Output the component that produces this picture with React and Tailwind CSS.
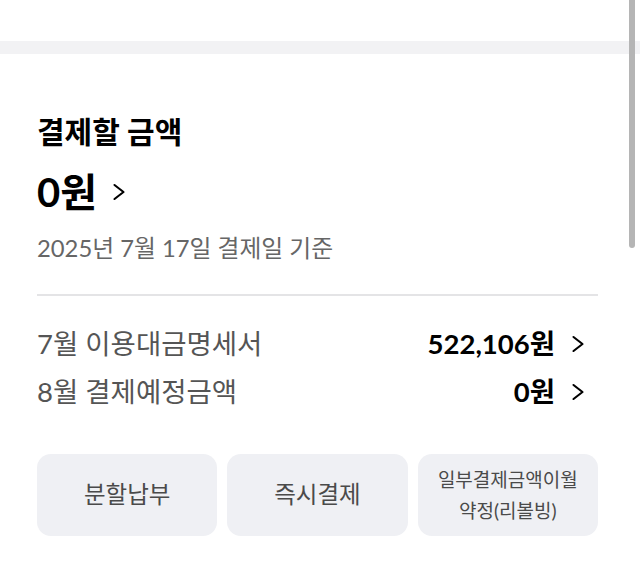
import React from 'react';

const FONT = { fontFamily: 'Lato, "Noto Sans CJK KR", "Noto Sans", sans-serif' };

function Chevron({ className }) {
  return (
    <svg className={className} viewBox="0 0 14 18" fill="none" stroke="currentColor" strokeWidth="2.1" strokeLinecap="round" strokeLinejoin="round">
      <polyline points="2.5,2 11.5,9 2.5,16" />
    </svg>
  );
}

function Row({ label, value }) {
  return (
    <div className="flex items-center justify-between h-[36px]">
      <span className="text-[27.5px] leading-[36px] text-[#555]">{label}</span>
      <span className="flex items-center gap-[16px]">
        <span className="text-[27.5px] leading-[36px] font-bold text-black">{value}</span>
        <Chevron className="w-[14px] h-[18px] text-black mr-[13px]" />
      </span>
    </div>
  );
}

export default function App() {
  return (
    <div className="relative w-[640px] h-[573px] bg-white overflow-hidden" style={FONT}>
      <div className="h-[41px]" />
      <div className="h-[13px] bg-[#f2f2f4]" />

      <div className="pl-[37px] pr-[42px]">
        <h2 className="mt-[59px] text-[30px] leading-[36px] font-bold text-black">결제할 금액</h2>

        <div className="mt-[19px] flex items-center gap-[15px] h-[48px]">
          <span className="text-[40px] leading-[48px] font-bold text-black">0원</span>
          <Chevron className="w-[14px] h-[18px] text-black" />
        </div>

        <p className="mt-[17px] text-[23.8px] leading-[30px] text-[#666]">2025년 7월 17일 결제일 기준</p>

        <div className="mt-[31px] h-[2px] bg-[#e4e4e6]" />

        <div className="mt-[30px] flex flex-col gap-[12px]">
          <Row label="7월 이용대금명세서" value="522,106원" />
          <Row label="8월 결제예정금액" value="0원" />
        </div>

        <div className="mt-[44px] grid grid-cols-3 gap-[10px]">
          <button className="h-[82px] rounded-[14px] bg-[#eff0f4] text-[23.5px] text-[#4a4a4a]">분할납부</button>
          <button className="h-[82px] rounded-[14px] bg-[#eff0f4] text-[23.5px] text-[#4a4a4a]">즉시결제</button>
          <button className="h-[82px] rounded-[14px] bg-[#eff0f4] text-[19px] leading-[31px] text-[#4a4a4a]">
            일부결제금액이월
            <br />
            약정(리볼빙)
          </button>
        </div>
      </div>

      <div className="absolute right-[5px] top-0 w-[6px] h-[248px] rounded-b-full bg-[#b5b5b5]" />
    </div>
  );
}
